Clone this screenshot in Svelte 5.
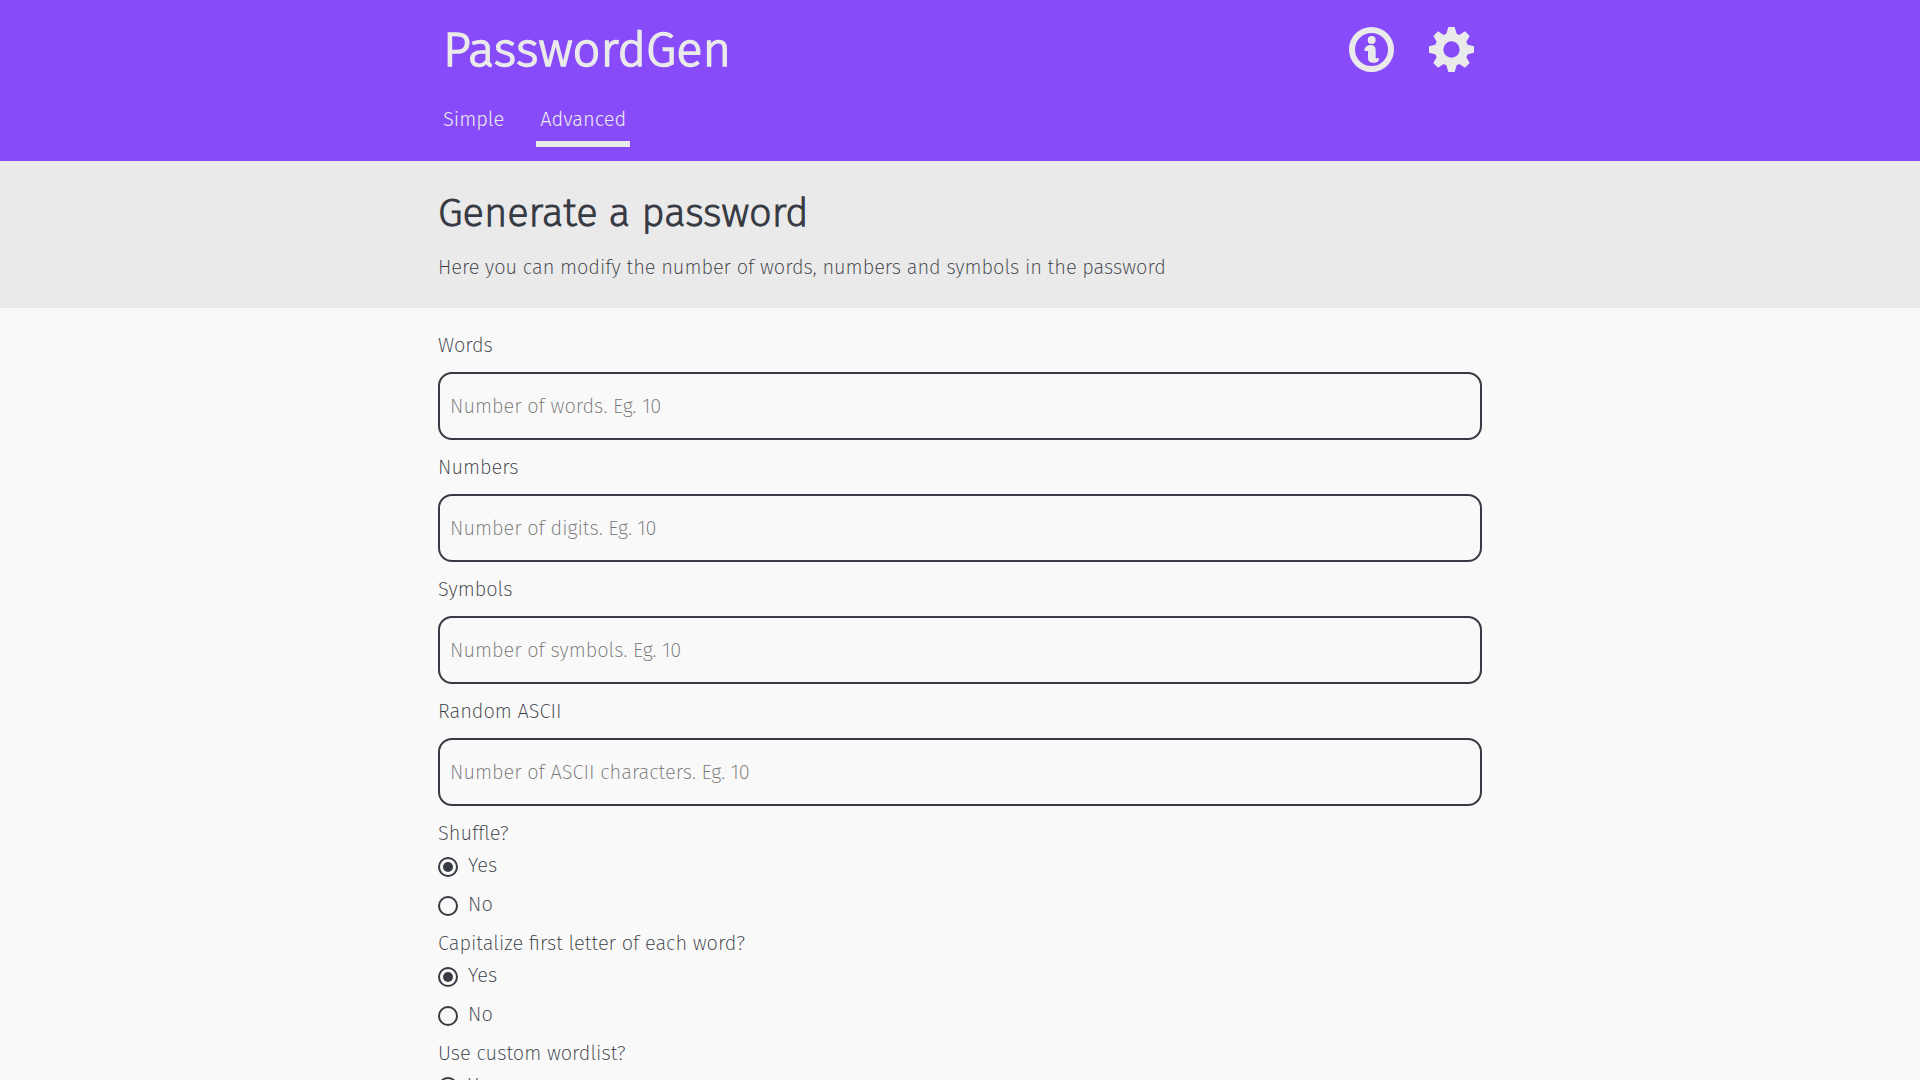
<script>
  const fields = [
    { id: 'words', label: 'Words', hint: 'Number of words. Eg. 10' },
    { id: 'numbers', label: 'Numbers', hint: 'Number of digits. Eg. 10' },
    { id: 'symbols', label: 'Symbols', hint: 'Number of symbols. Eg. 10' },
    { id: 'ascii', label: 'Random ASCII', hint: 'Number of ASCII characters. Eg. 10' }
  ];

  const choices = [
    { id: 'shuffle', label: 'Shuffle?' },
    { id: 'capitalize', label: 'Capitalize first letter of each word?' },
    { id: 'wordlist', label: 'Use custom wordlist?' }
  ];

  const picked = $state({ shuffle: 'Yes', capitalize: 'Yes', wordlist: 'Yes' });
</script>

<header>
  <div class="wrap">
    <div class="bar">
      <a class="brand" href="#home">PasswordGen</a>
      <div class="actions">
        <button type="button" aria-label="About">
          <svg viewBox="0 0 135 135" aria-hidden="true">
            <circle cx="67.5" cy="67.5" r="58.5" fill="none" stroke="currentColor" stroke-width="18" />
            <circle cx="68" cy="39" r="12" fill="currentColor" />
            <path fill="currentColor" d="M46 72C46 61 54 54 65 54C75 54 80 59 80 68V94H90C90 103 86 107 78 107H71C61 107 57 102 57 94V72Z" />
          </svg>
        </button>
        <button type="button" aria-label="Settings">
          <svg viewBox="0 0 135 135" aria-hidden="true">
            <path fill="currentColor" fill-rule="evenodd" d="M58 0H77L83 20L91 24L108 13L122 27L112 44L116 53L135 58V77L116 82L112 91L122 108L108 122L91 111L83 115L77 135H58L52 115L44 111L27 122L13 108L23 91L19 82L0 77V58L19 53L23 44L13 27L27 13L44 24L52 20ZM67.5 43A24.5 24.5 0 1 0 67.5 92A24.5 24.5 0 1 0 67.5 43Z" />
          </svg>
        </button>
      </div>
    </div>
    <nav>
      <a href="#simple">Simple</a>
      <a class="active" href="#advanced" aria-current="page">Advanced</a>
    </nav>
  </div>
</header>

<section class="intro">
  <div class="wrap">
    <h1>Generate a password</h1>
    <p>Here you can modify the number of words, numbers and symbols in the password</p>
  </div>
</section>

<main>
  <form class="wrap">
    {#each fields as field}
      <label class="title" for={field.id}>{field.label}</label>
      <input class="box" id={field.id} type="text" inputmode="numeric" placeholder={field.hint} />
    {/each}
    {#each choices as choice}
      <fieldset>
        <legend class="title">{choice.label}</legend>
        {#each ['Yes', 'No'] as option}
          <label class="option">
            <input type="radio" name={choice.id} value={option} bind:group={picked[choice.id]} />
            <span>{option}</span>
          </label>
        {/each}
      </fieldset>
    {/each}
  </form>
</main>

<style>
  :global(body) {
    margin: 0;
    background: #f9f9f9;
    color: #383b44;
    font: 400 20px/32px 'Fira Sans ExtraLight', 'Fira Sans', 'Open Sans', 'Noto Sans', sans-serif;
    overflow-x: hidden;
  }

  .wrap {
    box-sizing: border-box;
    width: 100%;
    max-width: 1044px;
    margin: 0 auto;
  }

  header {
    background: #874bfa;
    color: #eaeaea;
    font-family: 'Fira Sans Light', 'Fira Sans', 'Open Sans', 'Noto Sans', sans-serif;
  }

  .bar {
    display: flex;
    align-items: center;
    justify-content: space-between;
    height: 99px;
    padding: 0 8px 0 5px;
  }

  .brand {
    color: inherit;
    font-size: 49px;
    font-weight: 700;
    line-height: 64px;
    text-decoration: none;
  }

  .actions {
    display: flex;
    gap: 35px;
  }

  button {
    display: block;
    padding: 0;
    border: 0;
    background: none;
    color: inherit;
    cursor: pointer;
  }

  svg {
    display: block;
    width: 45px;
    height: 45px;
  }

  nav {
    display: flex;
    gap: 28px;
    padding: 0 1px 14px;
  }

  nav a {
    padding: 4px 4px 6px;
    border-bottom: 6px solid transparent;
    color: inherit;
    text-decoration: none;
  }

  nav .active {
    border-color: #eaeaea;
  }

  .intro {
    background: #eaeaea;
    padding: 24px 0 25px;
  }

  h1 {
    margin: 0 0 10px;
    font-size: 40px;
    font-weight: 700;
    line-height: 56px;
  }

  p {
    margin: 0;
  }

  main {
    padding: 14px 0;
  }

  .title {
    display: block;
    padding: 7px 0;
  }

  .box {
    display: block;
    box-sizing: border-box;
    width: 100%;
    height: 68px;
    margin: 4px 0;
    padding: 0 10px;
    border: 2px solid #383b44;
    border-radius: 14px;
    background: transparent;
    color: inherit;
    font: inherit;
  }

  .box::placeholder {
    color: #757575;
  }

  fieldset {
    min-width: 0;
    margin: 0;
    padding: 0;
    border: 0;
  }

  fieldset .title {
    padding: 7px 0 0;
  }

  .option {
    display: flex;
    align-items: flex-start;
    gap: 10px;
    height: 32px;
  }

  .option + .option {
    margin-top: 7px;
  }

  .option input {
    appearance: none;
    box-sizing: border-box;
    width: 20px;
    height: 20px;
    margin: 8px 0 0;
    padding: 3px;
    border: 2px solid #383b44;
    border-radius: 50%;
  }

  .option input:checked {
    background: #383b44 content-box;
  }
</style>
